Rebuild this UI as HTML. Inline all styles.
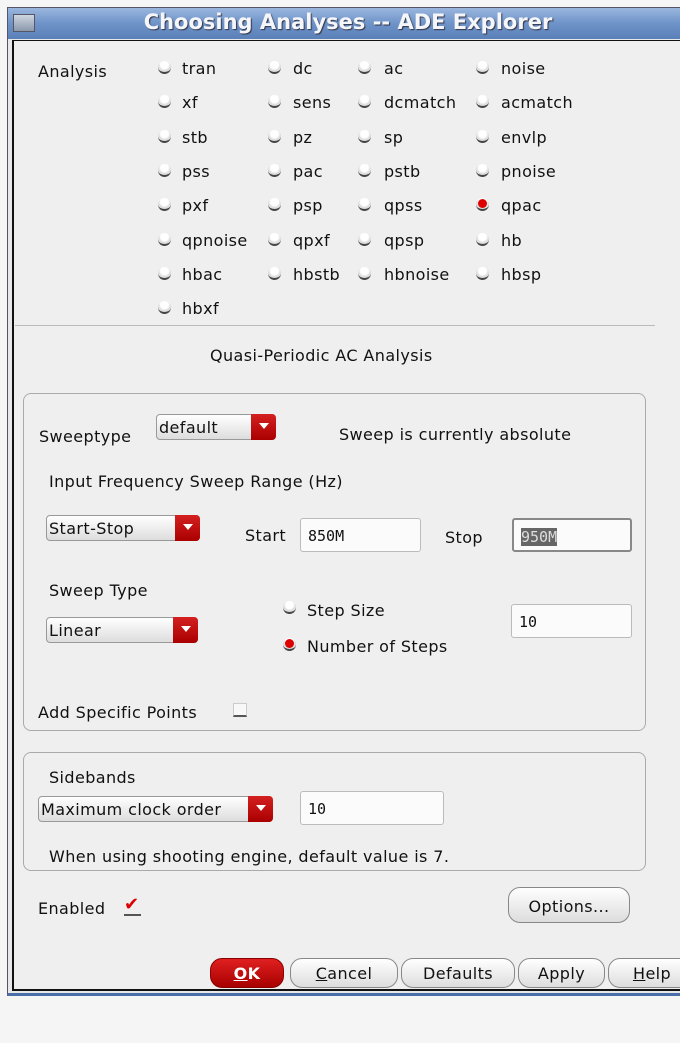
<!DOCTYPE html>
<html><head><meta charset="utf-8"><style>
*{box-sizing:border-box;margin:0;padding:0}
body{width:680px;height:1043px;background:#f5f5f5;position:relative;overflow:hidden;font-family:"DejaVu Sans","Liberation Sans",sans-serif;font-size:16px;letter-spacing:0.4px;color:#111}
.a{position:absolute;white-space:nowrap}
#win{position:absolute;left:7px;top:7px;width:690px;height:989px;background:#e8e8e8;border:1px solid #556;border-bottom:3px solid #4a6fa8}
#title{position:absolute;left:8px;top:8px;width:680px;height:31px;background:linear-gradient(#9ab6de,#6e93c8 50%,#5a80b8);}
#title .t{position:absolute;left:0;width:680px;text-align:center;top:2px;font:bold 21px "DejaVu Sans","Liberation Sans",sans-serif;letter-spacing:0;color:#f4f6fa;text-shadow:1px 1px 1px #334}
#body{position:absolute;left:12px;top:40px;width:680px;height:951px;background:#efefef;border-left:2px solid #111;border-top:1px solid #111;border-bottom:2px solid #111}
.r{position:absolute;width:13px;height:13px;border-radius:50%;background:radial-gradient(circle at 50% 35%,#fff 40%,#ddd 60%);border-bottom:2px solid #444}
.r.on::after{content:"";position:absolute;left:2px;top:1px;width:9px;height:9px;border-radius:50%;background:#d00}
.box{position:absolute;border:1px solid #aaa;border-radius:8px}
.dd{position:absolute;height:26px;border:1px solid #999;border-radius:4px;background:linear-gradient(#fff,#ddd);padding:3px 0 0 2px;font-size:16px}
.dd b{position:absolute;right:-1px;top:-1px;width:25px;height:26px;background:linear-gradient(#d42020,#a00);border-radius:0 4px 4px 0}
.dd b::after{content:"";position:absolute;left:8px;top:9px;border:5px solid transparent;border-top:6px solid #fff}
.in{position:absolute;height:34px;background:#fbfbfb;border:1px solid #bbb;border-radius:3px;font-family:"DejaVu Sans Mono","Liberation Mono",monospace;font-size:15px;letter-spacing:0;padding:8px 0 0 7px}
.btn{position:absolute;height:30px;border:1px solid #888;border-radius:12px;background:linear-gradient(#fff,#ddd);text-align:center;font-size:16px;padding-top:5px}
</style></head><body>
<div id="win"></div>
<div id="title"><div style="position:absolute;left:5px;top:6px;width:22px;height:18px;background:linear-gradient(#cfd6e0,#8a98ab);border:1px solid #556"></div><div class="t">Choosing Analyses -- ADE Explorer</div></div>
<div id="body"></div>

<div class="a" style="left:38px;top:62px">Analysis</div>

<div class="r" style="left:158px;top:61px"></div><div class="a" style="left:182px;top:59px">tran</div>
<div class="r" style="left:268px;top:61px"></div><div class="a" style="left:293px;top:59px">dc</div>
<div class="r" style="left:358px;top:61px"></div><div class="a" style="left:384px;top:59px">ac</div>
<div class="r" style="left:476px;top:61px"></div><div class="a" style="left:501px;top:59px">noise</div>

<div class="r" style="left:158px;top:95px"></div><div class="a" style="left:182px;top:93px">xf</div>
<div class="r" style="left:268px;top:95px"></div><div class="a" style="left:293px;top:93px">sens</div>
<div class="r" style="left:358px;top:95px"></div><div class="a" style="left:384px;top:93px">dcmatch</div>
<div class="r" style="left:476px;top:95px"></div><div class="a" style="left:501px;top:93px">acmatch</div>

<div class="r" style="left:158px;top:130px"></div><div class="a" style="left:182px;top:128px">stb</div>
<div class="r" style="left:268px;top:130px"></div><div class="a" style="left:293px;top:128px">pz</div>
<div class="r" style="left:358px;top:130px"></div><div class="a" style="left:384px;top:128px">sp</div>
<div class="r" style="left:476px;top:130px"></div><div class="a" style="left:501px;top:128px">envlp</div>

<div class="r" style="left:158px;top:164px"></div><div class="a" style="left:182px;top:162px">pss</div>
<div class="r" style="left:268px;top:164px"></div><div class="a" style="left:293px;top:162px">pac</div>
<div class="r" style="left:358px;top:164px"></div><div class="a" style="left:384px;top:162px">pstb</div>
<div class="r" style="left:476px;top:164px"></div><div class="a" style="left:501px;top:162px">pnoise</div>

<div class="r" style="left:158px;top:198px"></div><div class="a" style="left:182px;top:196px">pxf</div>
<div class="r" style="left:268px;top:198px"></div><div class="a" style="left:293px;top:196px">psp</div>
<div class="r" style="left:358px;top:198px"></div><div class="a" style="left:384px;top:196px">qpss</div>
<div class="r on" style="left:476px;top:198px"></div><div class="a" style="left:501px;top:196px">qpac</div>

<div class="r" style="left:158px;top:233px"></div><div class="a" style="left:182px;top:231px">qpnoise</div>
<div class="r" style="left:268px;top:233px"></div><div class="a" style="left:293px;top:231px">qpxf</div>
<div class="r" style="left:358px;top:233px"></div><div class="a" style="left:384px;top:231px">qpsp</div>
<div class="r" style="left:476px;top:233px"></div><div class="a" style="left:501px;top:231px">hb</div>

<div class="r" style="left:158px;top:267px"></div><div class="a" style="left:182px;top:265px">hbac</div>
<div class="r" style="left:268px;top:267px"></div><div class="a" style="left:293px;top:265px">hbstb</div>
<div class="r" style="left:358px;top:267px"></div><div class="a" style="left:384px;top:265px">hbnoise</div>
<div class="r" style="left:476px;top:267px"></div><div class="a" style="left:501px;top:265px">hbsp</div>

<div class="r" style="left:158px;top:301px"></div><div class="a" style="left:182px;top:299px">hbxf</div>

<div class="a" style="left:15px;top:325px;width:640px;height:1px;background:#bbb"></div>
<div class="a" style="left:210px;top:346px">Quasi-Periodic AC Analysis</div>

<div class="box" style="left:23px;top:393px;width:623px;height:338px"></div>
<div class="a" style="left:39px;top:427px">Sweeptype</div>
<div class="dd" style="left:156px;top:414px;width:120px">default<b></b></div>
<div class="a" style="left:339px;top:425px">Sweep is currently absolute</div>
<div class="a" style="left:49px;top:472px">Input Frequency Sweep Range (Hz)</div>
<div class="dd" style="left:46px;top:515px;width:154px">Start-Stop<b></b></div>
<div class="a" style="left:245px;top:526px">Start</div>
<div class="in" style="left:300px;top:518px;width:121px">850M</div>
<div class="a" style="left:445px;top:528px">Stop</div>
<div class="in" style="left:512px;top:518px;width:120px;border:2px solid #888"><span style="background:#666;color:#ddd">950M</span></div>
<div class="a" style="left:49px;top:581px">Sweep Type</div>
<div class="dd" style="left:46px;top:617px;width:152px">Linear<b></b></div>
<div class="r" style="left:283px;top:601px"></div><div class="a" style="left:307px;top:601px">Step Size</div>
<div class="r on" style="left:283px;top:638px"></div><div class="a" style="left:307px;top:637px">Number of Steps</div>
<div class="in" style="left:511px;top:604px;width:121px">10</div>
<div class="a" style="left:38px;top:703px">Add Specific Points</div>
<div class="a" style="left:233px;top:703px;width:14px;height:14px;border:1px solid #ccc;border-bottom:2px solid #555;background:#f8f8f8"></div>

<div class="box" style="left:23px;top:752px;width:623px;height:119px"></div>
<div class="a" style="left:49px;top:768px">Sidebands</div>
<div class="dd" style="left:38px;top:796px;width:235px">Maximum clock order<b></b></div>
<div class="in" style="left:300px;top:791px;width:144px">10</div>
<div class="a" style="left:49px;top:847px">When using shooting engine, default value is 7.</div>

<div class="a" style="left:38px;top:899px">Enabled</div>
<div class="a" style="left:124px;top:896px;width:17px;height:20px;border-bottom:2px solid #555;color:#d00;font-size:18px;font-weight:bold;line-height:18px">✔</div>
<div class="btn" style="left:508px;top:887px;width:122px;height:36px;padding-top:9px">Options...</div>

<div class="btn" style="left:210px;top:958px;width:74px;background:linear-gradient(#e02020,#a80000);color:#fff;font-weight:bold;border-color:#800"><u>O</u>K</div>
<div class="btn" style="left:290px;top:958px;width:108px"><u>C</u>ancel</div>
<div class="btn" style="left:401px;top:958px;width:114px">Defaults</div>
<div class="btn" style="left:518px;top:958px;width:87px">Apply</div>
<div class="btn" style="left:608px;top:958px;width:90px;text-align:left;padding-left:24px"><u>H</u>elp</div>
</body></html>
